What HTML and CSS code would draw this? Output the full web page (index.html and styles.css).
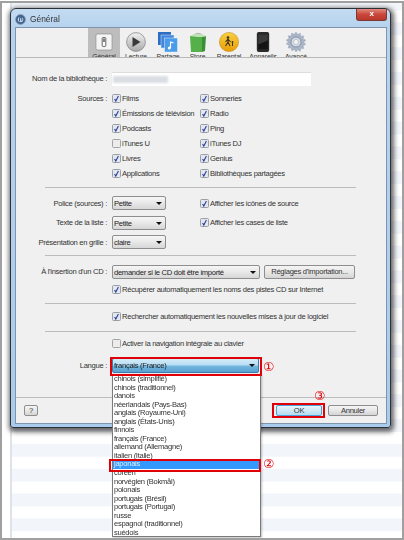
FILE: index.html
```html
<!DOCTYPE html>
<html lang="fr">
<head>
<meta charset="utf-8">
<title>Général</title>
<link rel="stylesheet" href="styles.css">
</head>
<body>
<svg class="defs" width="0" height="0" aria-hidden="true">
  <symbol id="on" viewBox="0 0 9 9">
    <rect x=".5" y=".5" width="8" height="8" rx="1" fill="#e4e8ee" stroke="#9a9fa6"/>
    <path d="M2.6 5l1.2 2L6.4 2" fill="none" stroke="#2a3f9c" stroke-width="1.1"/>
  </symbol>
  <symbol id="off" viewBox="0 0 9 9">
    <rect x=".5" y=".5" width="8" height="8" rx="1" fill="#ececec" stroke="#a4a4a4"/>
  </symbol>
</svg>
<div class="frame">
  <main class="window">
    <header class="titlebar">
      <svg class="appicon" viewBox="0 0 12 12"><circle cx="6" cy="6" r="5.4" fill="#3c5f8c" stroke="#8ea3bb"/><circle cx="6" cy="6" r="3" fill="#c7d8ea"/><path d="M5 8V4l2.4-.6v3.8" fill="none" stroke="#24466e"/></svg>
      <span class="wintitle">Général</span>
      <span class="close">x</span>
    </header>
    <div class="panel">
      <nav class="toolbar">
        <div class="tool active">
          <svg viewBox="0 0 20 20"><rect x="1" y="1" width="18" height="18" rx="2" fill="#f4f4f4" stroke="#9a9a9a"/><rect x="8" y="5" width="4" height="10" rx="1" fill="#fff" stroke="#555"/><rect x="9" y="6" width="2" height="4" fill="#777"/></svg>
          <span>Général</span>
        </div>
        <div class="tool">
          <svg viewBox="0 0 20 20"><defs><linearGradient id="g1" x1="0" y1="0" x2="0" y2="1"><stop offset="0" stop-color="#f2f2f2"/><stop offset="1" stop-color="#a9a9a9"/></linearGradient></defs><circle cx="10" cy="10" r="9.4" fill="url(#g1)" stroke="#8a8a8a" stroke-width=".8"/><path d="M6.5 5l8 5-8 5z" fill="#3a3a3a"/></svg>
          <span>Lecture</span>
        </div>
        <div class="tool">
          <svg viewBox="0 0 20 20"><rect x="0" y="0" width="13" height="13" fill="#2f6cc4"/><rect x="3" y="3" width="13" height="13" fill="#3f86dc" stroke="#dfeaf6" stroke-width=".5"/><rect x="6.5" y="6" width="13" height="14" fill="#4a9bea" stroke="#e8f1fa" stroke-width=".5"/><path d="M12.5 16V10l3 1" fill="none" stroke="#fff" stroke-width="1.2"/><circle cx="11.3" cy="16" r="1.5" fill="#fff"/></svg>
          <span>Partage</span>
        </div>
        <div class="tool">
          <svg viewBox="0 0 20 20"><path d="M6 5c0-5 8-5 8 0" fill="none" stroke="#b5b5b5" stroke-width="1.2"/><path d="M2 4l12 1v15H3z" fill="#55b04a"/><path d="M14 5l4-1-1 15-3 1z" fill="#3c8f36"/><path d="M2 4l12 1 4-1-4-2H6z" fill="#bfe2b3"/></svg>
          <span>Store</span>
        </div>
        <div class="tool">
          <svg viewBox="0 0 20 20"><defs><linearGradient id="g2" x1="0" y1="0" x2="0" y2="1"><stop offset="0" stop-color="#f9d040"/><stop offset="1" stop-color="#e79d08"/></linearGradient></defs><circle cx="10" cy="10" r="9.6" fill="url(#g2)" stroke="#b98306" stroke-width=".5"/><circle cx="9" cy="5.5" r="1.3" fill="#3c3215"/><path d="M9 7v4M6.5 14l2.5-4 2 4M6.5 10l2.5-3 2.5 3" fill="none" stroke="#3c3215" stroke-width="1.1"/><circle cx="13.5" cy="10" r=".9" fill="#3c3215"/><path d="M13.5 11v3" stroke="#3c3215"/></svg>
          <span>Parental</span>
        </div>
        <div class="tool">
          <svg viewBox="0 0 20 21"><rect x="3.5" y="0" width="13" height="21" rx="2" fill="#2b2b2b"/><rect x="5" y="3" width="10" height="15" fill="#141414"/><path d="M5 3h10v6L5 13z" fill="#3a3a3a"/></svg>
          <span>Appareils</span>
        </div>
        <div class="tool">
          <svg viewBox="0 0 20 20"><path d="M10 0l1.6 2.6 2.7-1.4.5 3 3-.3-.8 3 2.8 1.1-2 2.2 2 2.2-2.8 1.1.8 3-3-.3-.5 3-2.7-1.4L10 20l-1.6-2.6-2.7 1.4-.5-3-3 .3.8-3L.2 12 2.2 10 .2 8l2.8-1.2-.8-3 3 .3.5-3 2.7 1.4z" fill="#a9b4c6" stroke="#8e99ab" stroke-width=".4"/><circle cx="10" cy="10" r="5" fill="#d8dee8" stroke="#8792a5"/><circle cx="10" cy="10" r="2.6" fill="#f1f1f1" stroke="#98a2b3" stroke-width=".5"/></svg>
          <span>Avancé</span>
        </div>
      </nav>

      <div class="form">
        <div class="row row-name">
          <label class="label">Nom de la bibliothèque :</label>
          <div class="input"><span class="redacted"></span></div>
        </div>

        <div class="sources">
          <span class="label src-label">Sources :</span>
          <div class="checks">
            <div class="chk"><svg class="cb"><use href="#on"/></svg>Films</div>
            <div class="chk"><svg class="cb"><use href="#on"/></svg>Sonneries</div>
            <div class="chk"><svg class="cb"><use href="#on"/></svg>Émissions de télévision</div>
            <div class="chk"><svg class="cb"><use href="#on"/></svg>Radio</div>
            <div class="chk"><svg class="cb"><use href="#on"/></svg>Podcasts</div>
            <div class="chk"><svg class="cb"><use href="#on"/></svg>Ping</div>
            <div class="chk"><svg class="cb"><use href="#off"/></svg>iTunes U</div>
            <div class="chk"><svg class="cb"><use href="#on"/></svg>iTunes DJ</div>
            <div class="chk"><svg class="cb"><use href="#on"/></svg>Livres</div>
            <div class="chk"><svg class="cb"><use href="#on"/></svg>Genius</div>
            <div class="chk"><svg class="cb"><use href="#on"/></svg>Applications</div>
            <div class="chk"><svg class="cb"><use href="#on"/></svg>Bibliothèques partagées</div>
          </div>
        </div>

        <hr class="sep sep-a">

        <div class="row row-sel">
          <span class="label">Police (sources) :</span>
          <div class="select sel-s">Petite</div>
          <div class="chk chk-side"><svg class="cb"><use href="#on"/></svg>Afficher les icônes de source</div>
        </div>
        <div class="row row-sel">
          <span class="label">Texte de la liste :</span>
          <div class="select sel-s">Petite</div>
          <div class="chk chk-side"><svg class="cb"><use href="#on"/></svg>Afficher les cases de liste</div>
        </div>
        <div class="row row-sel">
          <span class="label">Présentation en grille :</span>
          <div class="select sel-s">claire</div>
        </div>

        <hr class="sep sep-b">

        <div class="row row-cd">
          <span class="label">À l'insertion d'un CD :</span>
          <div class="select sel-l">demander si le CD doit être importé</div>
          <div class="btn btn-import">Réglages d'importation...</div>
        </div>
        <div class="row row-opt1">
          <div class="chk chk-ind"><svg class="cb"><use href="#on"/></svg>Récupérer automatiquement les noms des pistes CD sur Internet</div>
        </div>

        <hr class="sep sep-c">

        <div class="row row-opt2">
          <div class="chk chk-ind"><svg class="cb"><use href="#on"/></svg>Rechercher automatiquement les nouvelles mises à jour de logiciel</div>
        </div>

        <hr class="sep sep-d">

        <div class="row row-opt3">
          <div class="chk chk-ind"><svg class="cb"><use href="#off"/></svg>Activer la navigation intégrale au clavier</div>
        </div>

        <div class="row row-lang">
          <span class="label">Langue :</span>
          <div class="select sel-lang">français (France)</div>
        </div>
      </div>

      <footer class="footer">
        <div class="btn btn-help">?</div>
        <div class="btn btn-ok">OK</div>
        <div class="btn btn-cancel">Annuler</div>
      </footer>
    </div>
  </main>

  <ul class="dropdown">
    <li>chinois (simplifié)</li>
    <li>chinois (traditionnel)</li>
    <li>danois</li>
    <li>néerlandais (Pays-Bas)</li>
    <li>anglais (Royaume-Uni)</li>
    <li>anglais (États-Unis)</li>
    <li>finnois</li>
    <li>français (France)</li>
    <li>allemand (Allemagne)</li>
    <li>italien (Italie)</li>
    <li class="picked">japonais</li>
    <li>coréen</li>
    <li>norvégien (Bokmål)</li>
    <li>polonais</li>
    <li>portugais (Brésil)</li>
    <li>portugais (Portugal)</li>
    <li>russe</li>
    <li>espagnol (traditionnel)</li>
    <li>suédois</li>
  </ul>

  <div class="mark mark-lang"></div>
  <div class="mark mark-item"></div>
  <div class="mark mark-ok"></div>
  <span class="num num1">①</span>
  <span class="num num2">②</span>
  <span class="num num3">③</span>
</div>
</body>
</html>
```

FILE: styles.css
```css
* { box-sizing: border-box; }
html, body { margin: 0; padding: 0; }
body {
  width: 404px;
  height: 540px;
  overflow: hidden;
  background: #fff;
  font-family: "Liberation Sans", Arial, sans-serif;
  font-size: 7.6px;
  letter-spacing: -.29px;
  color: #222;
}
.defs { position: absolute; }

.frame {
  position: relative;
  width: 404px;
  height: 539px;
  margin-top: 1px;
  border: 2px solid #a0a0a0;
  overflow: hidden;
  filter: blur(.3px);
  background:
    linear-gradient(90deg, #fff 0 8px, #dfe2e6 8px 10px, transparent 10px),
    linear-gradient(180deg, #f2f5fa 0 12.4px, #fff 12.4px) 0 19.4px / 100% 24.8px;
}

.window {
  width: 381px;
  height: 420px;
  margin: 5px 0 0 8px;
  padding: 0 3px 4px 4px;
  border: 1px solid #2c3138;
  border-radius: 6px 6px 3px 3px;
  background: linear-gradient(180deg, #c4dcf2 0, #b6d3ee 18px, #a9cbec 100%);
  box-shadow: 1px 2px 5px 2px rgba(0, 0, 0, .6);
}
.titlebar {
  height: 18px;
  display: flex;
  align-items: center;
  padding-top: 2px;
  position: relative;
}
.appicon { width: 11px; height: 11px; }
.wintitle { font-size: 8.4px; letter-spacing: 0; color: #333; margin-left: 4px; }
.close {
  position: absolute;
  right: 0;
  top: 0;
  width: 31px;
  height: 12px;
  border: 1px solid #7a3a34;
  border-top: 0;
  border-radius: 0 0 3px 3px;
  background: linear-gradient(180deg, #e28a80 0, #c9473a 50%, #b8382c 100%);
  color: #fff;
  font: bold 8px/10px "Liberation Sans", sans-serif;
  text-align: center;
}

.panel {
  height: 397px;
  border: 1px solid #7f95ad;
  background: #f0f0f0;
  display: flex;
  flex-direction: column;
}

.toolbar {
  height: 30px;
  flex: none;
  display: grid;
  grid-template-columns: 32px 32px 32px 27px 36px 32px 34px;
  align-items: start;
  padding-left: 72px;
  border-bottom: 1px solid #b8b8b8;
  overflow: hidden;
}
.tool {
  height: 30px;
  display: flex;
  flex-direction: column;
  align-items: center;
}
.tool svg { width: 20px; height: 20px; margin-top: 4px; flex: none; }
.tool span { font-size: 6.8px; letter-spacing: -.1px; line-height: 8px; margin-top: 1px; white-space: nowrap; color: #333; }
.tool.active { background: #bdbdbd; }
.tool.active svg { width: 18px; height: 18px; margin-top: 5px; margin-bottom: 1px; }

.form { flex: none; height: 339px; }
.row { display: flex; align-items: center; }
.label {
  width: 91px;
  margin-right: 5px;
  text-align: right;
  flex: none;
  color: #333;
  white-space: nowrap;
}
.row-name { height: 15px; margin-top: 13px; }
.input {
  width: 199px;
  height: 14px;
  background: #fff;
  border-top: 1px solid #ddd;
  display: flex;
  align-items: center;
  padding-left: 1px;
}
.redacted {
  width: 55px;
  height: 7px;
  background: #dadde2;
  filter: blur(1px);
}

.sources { display: flex; margin-top: 5px; }
.src-label { line-height: 15px; }
.checks {
  display: grid;
  grid-template-columns: 88px auto;
  grid-auto-rows: 15px;
}
.chk {
  display: flex;
  align-items: center;
  white-space: nowrap;
  color: #333;
}
.cb { width: 9px; height: 9px; margin-right: 1px; flex: none; }

.sep { border: 0; height: 1px; background: #bcbcbc; margin: 0 30px 0 29px; }
.sep-a { margin-top: 6px; }
.row-sel { height: 14px; margin-bottom: 5.5px; }
.sep-a + .row-sel { margin-top: 8px; }
.select {
  position: relative;
  height: 14px;
  line-height: 13px;
  padding-left: 1px;
  border: 1px solid #8e8e8e;
  border-radius: 2px;
  background: linear-gradient(180deg, #f6f6f6 0, #e8e8e8 50%, #d6d6d6 100%);
  color: #222;
  white-space: nowrap;
}
.select::after {
  content: "";
  position: absolute;
  right: 3px;
  top: 5px;
  border: 3px solid transparent;
  border-top: 3px solid #111;
  border-bottom: 0;
}
.sel-s { width: 54px; }
.chk-side { margin-left: 34px; }
.sep-b { margin-top: .5px; }
.row-cd { height: 14px; margin-top: 9px; }
.sel-l { width: 148px; }
.btn {
  border: 1px solid #8e8e8e;
  border-radius: 2px;
  background: linear-gradient(180deg, #f4f4f4 0, #e8e8e8 50%, #d4d4d4 100%);
  text-align: center;
  color: #333;
  display: flex;
  align-items: center;
  justify-content: center;
  white-space: nowrap;
}
.btn-import { width: 91px; height: 14px; margin-left: 4px; }
.chk-ind { margin-left: 96px; }
.row-opt1 { height: 14px; margin-top: 4px; }
.sep-c { margin-top: 6px; }
.row-opt2 { height: 14px; margin-top: 6px; }
.sep-d { margin-top: 7px; }
.row-opt3 { height: 14px; margin-top: 5px; }
.row-lang { height: 15px; margin-top: 7px; }
.sel-lang {
  z-index: 1;
  width: 147px;
  height: 15px;
  line-height: 13px;
  border-color: #3b7bb0;
  background: linear-gradient(180deg, #d4ecf8 0, #b8def4 45%, #74b6df 55%, #5aa2d2 100%);
}

.footer {
  flex: 1;
  display: flex;
  align-items: flex-start;
  border-top: 1px solid #bcbcbc;
  padding: 7px 8px 0;
}
.btn-help { width: 14px; height: 11px; }
.btn-ok {
  width: 46px;
  height: 11px;
  margin-left: 238px;
  border-color: #4ea4d8;
  background: linear-gradient(180deg, #e8f5fb 0, #cfe9f6 50%, #b4dcf1 100%);
}
.btn-cancel { width: 50px; height: 11px; margin-left: 6px; }

.dropdown {
  list-style: none;
  margin: 0;
  padding: 0;
  position: absolute;
  left: 110px;
  top: 371px;
  width: 149px;
  height: 163px;
  background: #fff;
  border: 1px solid #7a7a7a;
  color: #333;
  box-shadow: 1px 1px 2px rgba(0, 0, 0, .25);
}
.dropdown li { height: 8.55px; line-height: 8.55px; padding-left: 1px; white-space: nowrap; }
.dropdown .picked { background: #3399ff; color: #dbeeff; }

.mark { position: absolute; border: 2px solid #e00008; z-index: 2; }
.mark-lang { left: 108px; top: 354px; width: 152px; height: 19px; }
.mark-item { left: 107px; top: 456px; width: 152px; height: 13px; }
.mark-ok { left: 270px; top: 400px; width: 53px; height: 15px; }
.num {
  position: absolute;
  color: #e00008;
  letter-spacing: 0;
  font: 12.5px/12px "DejaVu Sans", sans-serif;
}
.num1 { left: 261px; top: 358px; }
.num2 { left: 261px; top: 455px; }
.num3 { left: 312px; top: 387px; }
```
